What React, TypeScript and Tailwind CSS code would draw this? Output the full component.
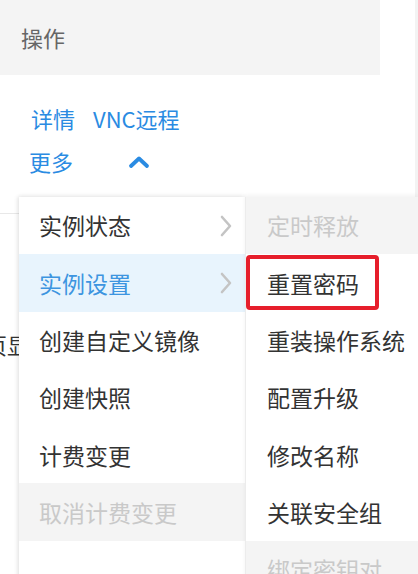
import { ReactNode } from "react";

const mainMenu = [
  { label: "实例状态", arrow: true },
  { label: "实例设置", arrow: true, active: true },
  { label: "创建自定义镜像" },
  { label: "创建快照" },
  { label: "计费变更" },
  { label: "取消计费变更", disabled: true },
  { label: "" },
];

const subMenu = [
  { label: "定时释放", disabled: true },
  { label: "重置密码", marked: true },
  { label: "重装操作系统" },
  { label: "配置升级" },
  { label: "修改名称" },
  { label: "关联安全组" },
  { label: "绑定密钥对", disabled: true },
];

const ChevronRight = () => (
  <svg width="14" height="22" viewBox="0 0 14 22" fill="none">
    <polyline points="3,2 11,11 3,20" stroke="#c4c4c4" strokeWidth="2.6" strokeLinecap="round" strokeLinejoin="round" />
  </svg>
);

const ChevronUp = () => (
  <svg width="22" height="14" viewBox="0 0 22 14" fill="none">
    <polyline points="3,11 11,3.5 19,11" stroke="#2a8be2" strokeWidth="3.8" strokeLinecap="round" strokeLinejoin="round" />
  </svg>
);

const Row = ({ children, className }: { children: ReactNode; className: string }) => (
  <div className={`flex h-[57.3px] items-center ${className}`}>{children}</div>
);

export default function App() {
  return (
    <div className="relative h-[574px] w-[418px] overflow-hidden bg-white font-['Noto_Sans_CJK_SC','Noto_Sans',sans-serif]">
      <div className="flex h-[75px] w-[380px] items-center bg-[#f4f4f4] pl-[21px] text-[22px] text-[#666]">操作</div>

      <div className="pt-[22px] text-[22px] text-[#2a8be2]">
        <div className="flex h-[43px] items-center gap-[18px] pl-[31px]">
          <span>详情</span>
          <span>VNC远程</span>
        </div>
        <div className="flex h-[43px] items-center pl-[29px]">
          <span>更多</span>
          <span className="ml-[55px] flex">
            <ChevronUp />
          </span>
        </div>
      </div>

      {/* table rows behind the dropdown */}
      <div className="mt-[30px] border-t border-[#e8e8e8]" />
      <div className="mt-[114px] -ml-[15px] text-[22px] text-[#333]">页显示</div>
      <div className="absolute top-0 right-0 h-full w-[3px] bg-[#f3f3f3]" />

      <div className="absolute top-[197px] left-[19px] w-[226px] bg-white text-[23px] text-[#333] shadow-[-2px_0_4px_rgba(0,0,0,0.08),0_-2px_4px_rgba(0,0,0,0.05)]">
        {mainMenu.map((m, i) => (
          <Row
            key={i}
            className={`justify-between pl-5 pr-3 ${m.active ? "bg-[#e8f4fd] text-[#3d95e0]" : m.disabled ? "bg-[#f4f4f4] text-[#c9c9c9]" : ""}`}
          >
            <span>{m.label}</span>
            {m.arrow && <ChevronRight />}
          </Row>
        ))}
      </div>

      <div className="absolute top-[197px] left-[245px] w-[173px] border-l border-[#ececec] bg-white text-[23px] text-[#333] shadow-[0_-2px_4px_rgba(0,0,0,0.05)]">
        {subMenu.map((m) => (
          <Row key={m.label} className={`relative pl-[21px] ${m.disabled ? "bg-[#f4f4f4] text-[#c9c9c9]" : ""}`}>
            <span>{m.label}</span>
            {m.marked && (
              <div className="absolute top-[1px] left-0 h-[55px] w-[133px] rounded-[4px] border-[4px] border-[#e61e2b]" />
            )}
          </Row>
        ))}
      </div>
    </div>
  );
}
